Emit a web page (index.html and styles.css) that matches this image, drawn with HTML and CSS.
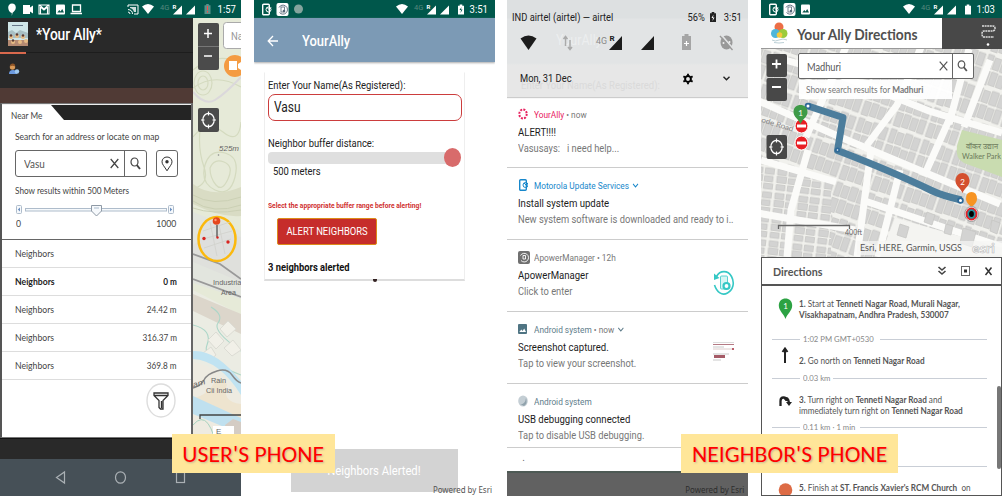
FILE: index.html
```html
<!DOCTYPE html>
<html lang="en">
<head>
<meta charset="utf-8">
<title>Your Ally</title>
<link rel="stylesheet" href="styles.css">
</head>
<body>
<svg class="defs" width="0" height="0">
  <defs>
    <g id="wifi"><path d="M0 2.6Q6 -2.6 12 2.6L6 10z"/></g>
    <g id="signal"><path d="M9 0V9H0z"/></g>
    <g id="battery"><path d="M1.7 0h2.6v1.2H6V10H0V1.2h1.700z"/></g>
    <g id="phone"><rect x=".7" y=".7" width="6.600" height="10.600" rx="1" fill="none" stroke="currentColor" stroke-width="1.400"/><circle cx="6.500" cy="6" r="2.500" fill="none" stroke="currentColor"/><path d="M5 4l2 2 2-2" fill="none" stroke="currentColor"/></g>
    <g id="sync"><rect width="12" height="13" rx="2"/><path d="M2.500 4.500A4.500 4.500 0 1 1 3 9.500" fill="none" stroke="#567" stroke-width=".9"/><rect x="4.500" y="4" width="3.500" height="5" fill="none" stroke="#567" stroke-width=".8"/><circle cx="7.500" cy="8" r="1.300" fill="#567"/></g>
    <g id="image"><rect width="9" height="10" rx="1"/><path d="M1.300 8l2-2.600 1.300 1.500 1.600-2.400L8 8z" fill="#0b594e"/></g>
    <pattern id="houses" width="34" height="34" patternUnits="userSpaceOnUse" patternTransform="rotate(19)">
      <path d="M1 1h6v14H1zM8.500 2.500h6.500v12H8.500zM16.500 1h7v14h-7zM25 2h7v13h-7zM1 17.500h7v14H1zM9.500 17h6.500v13.500H9.500zM17.500 18h6.500v12.500h-6.500zM25.500 17h6.500v14h-6.500z" fill="#d3d3d2" stroke="#c4c4c2" stroke-width=".7"/>
    </pattern>
    <pattern id="houses2" width="24" height="24" patternUnits="userSpaceOnUse" patternTransform="rotate(7)">
      <path d="M1 1h9v5.500H1zM12.500 1h9v6h-9zM1 8h9.500v6.500H1zM12.500 9h8.500v5.500h-8.500zM1 16.500h9V22H1zM12.500 16.500h9V22h-9z" fill="#d3d3d2" stroke="#c4c4c2" stroke-width=".7"/>
    </pattern>
  </defs>
</svg>

<main class="board">
  <section class="phone finder">
    <div class="status">
      <svg width="215" height="18" viewBox="0 0 215 18" fill="#fff">
        <path d="M12 3.500c2.300 0 3.800 1.600 3.800 4 0 2.700-1.700 3.700-3.200 5.200L11.800 16v-3C9.500 12.600 8.200 10 8.200 7.600 8.200 5.200 9.700 3.500 12 3.500z"/>
        <path d="M23 5h7v2.500l3-2v8l-3-2V14h-7z"/>
        <path d="M39 5h10v9H39zM40.500 14V7l3.500 3 3.500-3v7M39.500 5l4.500 4 4.500-4" fill="none" stroke="#fff" stroke-width="1.100"/>
        <use href="#image" x="56" y="4.500"/>
        <path d="M72.500 5h8v6.500h-8zM70.500 13.500h11.500" fill="none" stroke="#fff" stroke-width="1.300"/>
        <path d="M128 7V5h10v9h-4M128 9.500q4.500.5 4.500 4.500M128 12q2 .2 2 2" fill="none" stroke="#fff"/><path d="M130 7h6v5h-2q-1-3.500-4-4z" opacity=".8"/>
        <use href="#wifi" x="142" y="4"/>
        <text class="net" x="160" y="9.500">4G</text><text class="roam" x="172.500" y="9">R</text>
        <use href="#signal" x="173" y="5.500"/><use href="#signal" x="186" y="5.500"/>
        <use href="#battery" x="204.500" y="4" opacity=".35"/><path d="M207 6h1v4h-1zM207 11h1v1.500h-1z" fill="#f44"/>
      </svg>
      <span class="time">1:57</span>
    </div>
    <div class="finder-body">
      <div class="side">
        <header class="app-head">
          <svg width="20" height="24" viewBox="0 0 20 24"><path fill="#cfe6e8" d="M0 0h20v24H0z"/><path d="M4 3h11v1H4z" fill="#678"/><path d="M0 10l4-2 4 3 4-3 8 3v5H0z" fill="#a9c0c4"/><path d="M0 18h20v6H0z" fill="#b58a72"/><g fill="#e6bb85"><circle cx="3" cy="15" r="2"/><circle cx="9" cy="14" r="2"/><circle cx="15" cy="15" r="2"/><circle cx="5" cy="20" r="2"/><circle cx="12" cy="20" r="2"/><circle cx="18" cy="19" r="2"/></g><g fill="#5b3b33"><circle cx="3" cy="13.500" r="1.200"/><circle cx="9" cy="12.500" r="1.200"/><circle cx="15" cy="13.500" r="1.200"/><circle cx="5" cy="18.500" r="1.200"/></g></svg>
          <h1 class="sq">*Your Ally*</h1>
        </header>
        <div class="tool-row"><i class="active-line"></i>
          <svg width="12" height="13" viewBox="0 0 12 13"><path d="M1 11q0-4 4-4t4 4z" fill="#6d9be0"/><circle cx="4.500" cy="4" r="2.700" fill="#d99a58"/><path d="M1.800 3.500q.5-3 3-3 2.300 0 2.500 3-3-1.500-5.500 0z" fill="#8f5527"/><circle cx="9" cy="8.500" r="2.200" fill="#9fc9ef"/></svg>
        </div>
        <div class="brown"></div>
        <div class="panel">
          <div class="tab"><span class="sq">Near Me</span></div>
          <div class="search-part">
            <p class="sq wide">Search for an address or locate on map</p>
            <div class="search-line">
              <div class="box"><span class="sq">Vasu</span>
                <svg width="9" height="11" viewBox="0 0 9 11"><path d="M.7 1l7.600 9M8.300 1L.7 10" stroke="#444" stroke-width="1.200"/></svg>
                <b class="go"><svg width="11" height="13" viewBox="0 0 11 13"><ellipse cx="4.500" cy="5" rx="3.500" ry="4" fill="none" stroke="#444" stroke-width="1.200"/><path d="M6.800 8l3.200 4" stroke="#444" stroke-width="2"/></svg></b>
              </div>
              <div class="locate"><svg width="12" height="16" viewBox="0 0 12 16"><path d="M6 14.800C3.500 10.500 1 8.500 1 5.800 1 3 3.200 1 6 1s5 2 5 4.800c0 2.700-2.500 4.700-5 9z" fill="none" stroke="#333"/><circle cx="6" cy="5.800" r="1.700" fill="#333"/></svg></div>
            </div>
            <p class="sq range-title">Show results within 500 Meters</p>
            <svg class="range" width="160" height="14" viewBox="0 0 160 14"><g fill="#f6f9fc" stroke="#aebccb"><rect x="1.500" y="2.500" width="5" height="8" rx="1"/><rect x="153.500" y="2.500" width="5" height="8" rx="1"/><rect x="10.500" y="5.500" width="141" height="2.500"/><path d="M76.500 2.500h10V8l-5 5-5-5z" stroke="#8f9aa6"/></g><path d="M5 4.500v4L2.800 6.500zM155 4.500v4l2.200-2z" fill="#6c8fc0"/><path d="M79 5h5" stroke="#abc"/></svg>
            <div class="ends"><span class="sq">0</span><span class="sq rt">1000</span></div>
          </div>
          <ul class="rows">
            <li><span class="sq wider">Neighbors</span></li>
            <li class="strong"><span class="sq wider">Neighbors</span><span class="sq rt">0 m</span></li>
            <li><span class="sq wider">Neighbors</span><span class="sq rt">24.42 m</span></li>
            <li><span class="sq wider">Neighbors</span><span class="sq rt">316.37 m</span></li>
            <li><span class="sq wider">Neighbors</span><span class="sq rt">369.8 m</span></li>
          </ul>
          <div class="filter"><svg width="30" height="35" viewBox="0 0 30 35"><ellipse cx="15" cy="17.500" rx="14" ry="16.500" fill="#fff" stroke="#ddd" stroke-width="1.400"/><path d="M8 10h14v2.500l-5 5V26h-2.500L13 24.500v-7l-5-5zM8.500 12.500h13M15.500 18v7" fill="none" stroke="#333" stroke-width="1.300"/></svg></div>
        </div>
        <div class="foot"></div>
      </div>
      <svg class="terrain" width="48" height="441" viewBox="193 18 48 441">
        <path fill="#e6ead8" d="M193 18h48v441h-48z"/>
        <g fill="none" stroke="#d4dabf" stroke-width="1.200"><path d="M193 70q20-18 48-8M193 88q22-16 48-1M193 137q14-18 30-5t18-10M205 165q5-16 20-12t10 24-20 13-10-25zM210 168q4-10 14-6t4 17-12 6-6-17zM200 130q-2 20 4 37t-11 22"/><ellipse cx="203" cy="83" rx="9" ry="12"/><ellipse cx="203" cy="83" rx="5" ry="7"/></g>
        <path d="M193 184q20 15 48 3v29q-20 2-48-12z" fill="#d9dcc4"/><path d="M193 195q20 12 48 2M193 201q20 14 48 4M193 208q20 7 48 2" stroke="#cbd0b4" fill="none"/>
        <path d="M193 92q12 14 22 8t26-23" fill="none" stroke="#dbd8db" stroke-width="2"/>
        <path d="M193 212l48 19v68l-48-16z" fill="#e2e5de"/>
        <path d="M193 245q20-15 48-8v45l-48-20z" fill="#dfe0dc"/>
        <path d="M193 290l48 25v144h-48z" fill="#ebece3"/><path d="M193 294l48 20v20l-48-23z" fill="#dcd6cb"/>
        <path d="M193 254l27 10 21 15M193 279l48 18" fill="none" stroke="#999" stroke-width="1.800"/>
        <path d="M193 325q20 5 14 20t34 30M211 307q13 8 7 16t23 28" fill="none" stroke="#acd6c8" stroke-width="1.100"/>
        <g fill="#f1f0e8" stroke="#dcdcd4"><path d="M208 340l8-8 8 9-8 8zM220 329l8-8 8 8-9 8zM224 348l9-8 8 10-9 6zM203 353l8-6 5 8-7 6z"/></g>
        <path d="M193 351q22-2 48 30v14q-22-35-48-36z" fill="#c0e3f2"/><path d="M193 362q25 4 48 34v63h-48z" fill="#eeebe1"/>
        <path d="M193 398q15-2 24-20l10 6q-6 18 14 20v17q-25-6-48-14z" fill="#eee4cf"/>
        <path d="M193 396l48 22v16l-48-20z" fill="#bfe0ef"/><path d="M193 425q17-20 26 34" stroke="#a6d2bf" fill="none"/>
        <path d="M193 388q8-2 11-8t13-9 15 4 9 8" fill="none" stroke="#888" stroke-width="1.500"/>
        <path d="M225 425l8-6 8 3v25l-9 5z" fill="#d4ccc4"/>
        <g class="map-text"><text x="219" y="151" class="it" textLength="20" lengthAdjust="spacingAndGlyphs">525m</text><text x="213" y="285" textLength="30" lengthAdjust="spacingAndGlyphs">Industrial</text><text x="221" y="294.500" textLength="15" lengthAdjust="spacingAndGlyphs">Area</text><text x="211" y="383" textLength="15" lengthAdjust="spacingAndGlyphs">Rain</text><text x="206" y="393" textLength="26" lengthAdjust="spacingAndGlyphs">Cii India</text><text x="193.500" y="388" class="it" textLength="13" lengthAdjust="spacingAndGlyphs" transform="rotate(-18 193 388)">am</text></g>
        <circle cx="218.500" cy="155" r=".8" fill="#888"/>
        <ellipse cx="217" cy="239" rx="18.500" ry="22" fill="#ddd" fill-opacity=".6" stroke="#fbb90e" stroke-width="2.500"/>
        <g stroke="#d0d0cb" stroke-width=".8"><path d="M203 231l27-9M203 239l29-8M204 248l27-9M210 222l7 34M218 220l7 34"/></g>
        <path d="M217 225v12" stroke="#666" stroke-width="1.500"/><circle cx="216.500" cy="221" r="3.800" fill="#e6461d"/><circle cx="215.500" cy="220" r="1.200" fill="#ff9c78"/>
        <g fill="#d8241f"><circle cx="204" cy="238.500" r="1.700"/><circle cx="228" cy="242" r="1.700"/><circle cx="217.500" cy="237.500" r="1.200"/></g>
        <g fill="#4b4b4b"><rect x="198" y="23" width="21" height="47" rx="2"/><rect x="198" y="108" width="21" height="24" rx="2"/></g>
        <path d="M204 33.500h8M208 29v9M204 56h8" stroke="#fff" stroke-width="1.500"/><path d="M198 46.500h21" stroke="#777"/>
        <g fill="none" stroke="#fff" stroke-width="1.200"><ellipse cx="208.500" cy="120" rx="5.700" ry="6.700"/><path d="M208.500 111.500v4M208.500 124.500v4M201 120h3.500M212.500 120h3.500"/></g>
        <rect x="223.500" y="22.500" width="25" height="26" rx="3" fill="#fff" stroke="#aaa"/><text x="231" y="39.500" class="map-hint" textLength="12" lengthAdjust="spacingAndGlyphs">Na</text>
        <circle cx="235" cy="66" r="11" fill="#f49b42"/><path d="M229 61h8v9h-8zM238 64l3-2v8l-3-2z" fill="#fff"/>
        <path d="M193.500 419v-4H241" fill="none" stroke="#444" stroke-width="1.300" transform="translate(6.500 0)"/>
        <path d="M213 426h21v9h-21z" fill="#fff"/><text x="216" y="434" class="map-text">E</text>
      </svg>
    </div>
    <div class="nav"><svg width="241" height="37" viewBox="0 459 241 37" fill="none" stroke="#aab0b4" stroke-width="1.200"><path d="M64.500 472v11l-8-5.500z"/><ellipse cx="120.500" cy="477.500" rx="5" ry="5.700"/><rect x="176.500" y="472.500" width="8" height="10"/></svg></div>
  </section>

  <section class="phone alerting">
    <div class="status">
      <svg width="213" height="18" viewBox="0 0 213 18" fill="#fff" color="#fff">
        <use href="#phone" x="8" y="3.500"/><use href="#sync" x="22.500" y="3"/><circle cx="44.500" cy="9" r="4.500" fill="#84a49d"/>
        <use href="#wifi" x="142" y="4"/><text class="net" x="160" y="9.500">4G</text><text class="roam" x="172.500" y="9">R</text>
        <use href="#signal" x="173" y="5.500"/><use href="#signal" x="186" y="5.500"/><use href="#battery" x="204" y="4.500"/><path d="M207.500 7l-2 3h1.500l-.5 3 2-3.500H207z" fill="#00574b"/>
      </svg>
      <span class="time">3:51</span>
    </div>
    <header class="bar"><svg width="12" height="12" viewBox="0 0 12 12"><path d="M11 6H1.500M6 1L1.200 6 6 11" fill="none" stroke="#fff" stroke-width="1.300"/></svg><h2 class="sq">YourAlly</h2></header>
    <div class="form">
      <label class="sq">Enter Your Name(As Registered):</label>
      <div class="name"><span class="sq">Vasu</span></div>
      <label class="sq dist">Neighbor buffer distance:</label>
      <div class="track"><i class="thumb"></i></div>
      <div class="meters sq">500 meters</div>
      <div class="warn sq">Select the appropriate buffer range before alerting!</div>
      <button class="alert"><span class="sq mid">ALERT NEIGHBORS</span></button>
      <div class="result sq">3 neighbors alerted</div>
      <i class="speck"></i>
    </div>
    <div class="toast"><span class="sq mid">Neighbors Alerted!</span></div>
    <div class="powered sq rt">Powered by Esri</div>
  </section>

  <section class="phone shade">
    <div class="quick">
      <span class="ghost g1 sq">YourAlly</span><span class="ghost g2 sq">Enter Your Name(As Registered):</span>
      <div class="carrier"><span class="sq">IND airtel (airtel) — airtel</span><span class="sq rt pct">56%</span><svg width="6" height="11" viewBox="0 0 6 11" fill="#222"><use href="#battery"/><path d="M3.500 2.500l-2 3.500H3L2.500 9l2-3.500H3z" fill="#fff"/></svg><span class="sq rt clock">3:51</span></div>
      <svg class="toggles" width="241" height="34" viewBox="507 26 241 34" fill="#1c1c1c">
        <path d="M520.500 38.500q8-6 16 0L528.500 50z"/><g stroke="#aaa" stroke-width="1.500" fill="none"><path d="M565.500 46V37M563.500 39l2-2.500 2 2.500M570 40v9M568 47l2 2.500 2-2.500"/></g>
        <text x="596" y="43.500" fill="#888" class="bignet" textLength="11" lengthAdjust="spacingAndGlyphs">4G</text><text x="609.500" y="41" class="bigr">R</text><path d="M622 36v14h-13zM654 36v14h-13z"/>
        <path d="M684.500 34h4v2h2.500v14h-9V36h2.500z" fill="#a5a5a5"/><path d="M684 43.500h5M686.500 41v5" stroke="#fff" stroke-width="1.200"/>
        <ellipse cx="726.500" cy="42.500" rx="6" ry="7" fill="#999"/><path d="M720.500 34l13 15" stroke="#e2e4e5" stroke-width="1.700"/><path d="M720 36l12.500 14" stroke="#999" stroke-width="1.300"/><circle cx="723.500" cy="43" r="1" fill="#eee"/><circle cx="729.500" cy="42" r="1" fill="#eee"/>
      </svg>
      <div class="date"><span class="sq">Mon, 31 Dec</span>
        <svg width="10" height="12" viewBox="-5.500 -6 11 12"><circle r="3.200" fill="none" stroke="#000" stroke-width="2.200"/><path d="M-1 -5.800h2v2h-2zM-1 3.800h2v2h-2z"/><path d="M-1 -5.800h2v2h-2zM-1 3.800h2v2h-2z" transform="rotate(60)"/><path d="M-1 -5.800h2v2h-2zM-1 3.800h2v2h-2z" transform="rotate(120)"/></svg>
        <svg width="7" height="5" viewBox="0 0 7 5"><path d="M.5.800l3 3 3-3" fill="none" stroke="#222" stroke-width="1.400"/></svg></div>
    </div>
    <article class="note pink"><div class="from"><svg width="10" height="12" viewBox="0 0 10 12"><ellipse cx="5" cy="6" rx="3.700" ry="4.500" fill="none" stroke="#e8215f" stroke-width="2" stroke-dasharray="2 1.200"/></svg><span class="sq"><b>YourAlly</b> • now</span></div><h3 class="sq">ALERT!!!!</h3><p class="sq">Vasusays: &nbsp; i need help...</p></article>
    <article class="note blue"><div class="from"><svg width="10" height="12" viewBox="0 0 10 12" color="#1787cb"><use href="#phone" x="1"/></svg><span class="sq"><b>Motorola Update Services</b> <svg width="7" height="5" viewBox="0 0 7 5"><path d="M.5.800l3 3 3-3" fill="none" stroke="#1787cb" stroke-width="1.200"/></svg></span></div><h3 class="sq">Install system update</h3><p class="sq">New system software is downloaded and ready to i..</p></article>
    <article class="note"><div class="from"><svg width="12" height="13" viewBox="0 0 12 13" fill="#707070"><rect width="12" height="13" rx="2"/><g fill="none" stroke="#fff" stroke-width=".9"><path d="M2.500 4.500A4.300 4.300 0 1 1 3 9.500M5 4.500h2.500v3.500H5z"/></g></svg><span class="sq">ApowerManager • 12h</span></div><h3 class="sq">ApowerManager</h3><p class="sq">Click to enter</p>
      <svg class="thumbnail" width="22" height="26" viewBox="0 0 22 26"><g fill="none" stroke="#35c8c5" stroke-width="1.600"><path d="M3.500 6.500C7 0 15 0 18.500 6.500S20 20 14.500 23 4 22.500 1.500 15"/><rect x="7.500" y="6" width="7" height="13" rx="1" fill="#d7f6f4" stroke-width=".8"/><circle cx="13.500" cy="16" r="3" fill="#fff" stroke-width="2.200"/></g><path d="M1 3.500v6.500l5.500-2z" fill="#35c8c5"/></svg></article>
    <article class="note slate"><div class="from"><svg width="9" height="10" viewBox="0 0 9 10" fill="#4f7483"><rect width="9" height="10" rx="1"/><path d="M1.300 8l2-2.600 1.300 1.500 1.600-2.400L8 8z" fill="#fff"/></svg><span class="sq"><b>Android system</b> • now <svg width="7" height="5" viewBox="0 0 7 5"><path d="M.5.800l3 3 3-3" fill="none" stroke="#607d8b" stroke-width="1.200"/></svg></span></div><h3 class="sq">Screenshot captured.</h3><p class="sq">Tap to view your screenshot.</p>
      <svg class="thumbnail" width="22" height="20" viewBox="0 0 22 20"><path d="M0 .5h21" stroke="#ddd"/><path d="M0 2.500h21" stroke="#b57a84"/><path d="M0 5h11M0 12h16M0 18h8" stroke="#bbb" stroke-width=".8"/><path d="M0 7h21" stroke="#dcc"/><circle cx="20" cy="7" r="1" fill="#a34"/><rect x="1" y="13" width="11" height="3" fill="#a55b67"/></svg></article>
    <article class="note slate last"><div class="from"><svg width="10" height="12" viewBox="0 0 10 12"><ellipse cx="5" cy="6" rx="4.800" ry="5.500" fill="#c4ced4"/><path d="M2 9q5 1 6-6 2 5-2 8z" fill="#90a2ac"/></svg><span class="sq"><b>Android system</b></span></div><h3 class="sq">USB debugging connected</h3><p class="sq">Tap to disable USB debugging.</p></article>
    <div class="more">.</div>
    <div class="under"><span class="sq rt">Powered by Esri</span></div>
  </section>

  <section class="phone directions">
    <div class="status">
      <svg width="213" height="18" viewBox="0 0 213 18" fill="#fff" color="#fff">
        <use href="#phone" x="8" y="3.500"/><use href="#sync" x="22.500" y="3"/><use href="#image" x="40" y="4.500"/>
        <use href="#wifi" x="142" y="4"/><text class="net" x="160" y="9.500">4G</text><text class="roam" x="172.500" y="9">R</text>
        <use href="#signal" x="173" y="5.500"/><use href="#signal" x="186" y="5.500"/><use href="#battery" x="204" y="4.500"/>
      </svg>
      <span class="time">1:03</span>
    </div>
    <header class="dir-head">
      <svg width="17" height="22" viewBox="0 0 17 22"><circle cx="8" cy="5" r="4.500" fill="#ec6e46"/><circle cx="4.500" cy="11.500" r="4.500" fill="#4fb6d9"/><circle cx="12" cy="11.500" r="4.500" fill="#9bcb3c"/><circle cx="8.500" cy="13" r="2.800" fill="#f6c83d"/><path d="M1 18q3 2 7 0t8 0M3 20.500q5 1 10 0" stroke="#bcd0d6" fill="none"/></svg>
      <h2 class="sq">Your Ally Directions</h2>
      <div class="route-tab"><svg width="16" height="24" viewBox="0 0 16 24"><path d="M2 3h11q2 0 2 2.200T13 8H4Q2 8 2 11t2 3h10" fill="none" stroke="#ddd" stroke-width="1.500" stroke-dasharray="2 .6"/><circle cx="8" cy="21.500" r="1.300" fill="#fff"/></svg></div>
    </header>
    <div class="street">
      <svg width="241" height="208" viewBox="761 49 241 208">
        <path fill="#f1f1ed" d="M761 49h241v208H761z"/><path fill="url(#houses)" d="M761 49h241v208H761z"/>
        <path fill="#f1f1ed" d="M761 162l70 20v75h-70z"/><path fill="url(#houses2)" d="M761 162l70 20v75h-70z"/>
        <g fill="none" stroke="#fbfbf9" stroke-width="7"><path d="M745 95l95 42 160 67M761 160l75 22M785 60l54 15 90 36 73 22M808 150l-17 60-4 47M871 150l-14 107M846 47l-40 90M922 45l-25 60-30 40M949 120l-24 54M969 49l-20 75M900 170l-22 87M740 210l115 20M862 200l140 47M990 60l-26 67"/></g>
        <path d="M895 218l107 30v9H880z" fill="#f4f4f1"/>
        <g fill="#d3d3d2" stroke="#c4c4c2" stroke-width=".7"><path d="M927 212l8 3-3 10-8-3zM946 224l7 2-2 9-7-2zM963 228l13 4-4 15-12-4zM992 220l8 3-3 11-7-3zM900 224l9 3-3 11-9-3z"/></g>
        <path d="M962 130l40 10v37l-38-14q-9-4-7-17z" fill="#c9dcb0"/>
        <g class="street-text"><text x="966" y="149" textLength="32" lengthAdjust="spacingAndGlyphs" class="green">वॉकर उद्यान</text><text x="962" y="158.500" class="green" textLength="39" lengthAdjust="spacingAndGlyphs">Walker Park</text><text x="761" y="122" transform="rotate(17 761 122)" textLength="33" lengthAdjust="spacingAndGlyphs">ode Road</text></g>
        <path d="M808 106l35 11.500-5.500 33q55 21 94 40 10 5 30 9.500" fill="none" stroke="#4c7d9c" stroke-width="7" stroke-linejoin="round"/>
        <g fill="#fff" stroke="#2f6a99" stroke-width="1.800"><circle cx="808" cy="106" r="2.400"/><circle cx="837.500" cy="150" r="1.700"/><circle cx="960.500" cy="200.500" r="2.400"/></g>
        <g fill="#e91e24" stroke="#fff"><ellipse cx="801.500" cy="126" rx="6.500" ry="7"/><ellipse cx="801.500" cy="143" rx="6.500" ry="7"/></g><path d="M797 126h9M797 143h9" stroke="#fff" stroke-width="3"/>
        <path d="M800.500 124c-2-5-7-7-7-12 0-4.500 3.200-7 7-7s7 2.500 7 7c0 5-5 7-7 12z" fill="#3f9b48"/><text class="pin" x="800.500" y="116">1</text>
        <path d="M962.500 193c-2-5-7-7-7-12 0-5 3.200-8 7-8s7 3 7 8c0 5-5 7-7 12z" fill="#d4502f"/><text class="pin" x="962.500" y="184.500">2</text>
        <path d="M966 199q0-7 5.500-7t5.500 7q0 4-5.500 8-5.500-4-5.500-8z" fill="#f79423"/>
        <ellipse cx="971.500" cy="214" rx="6.800" ry="7.500" fill="#fff" stroke="#999"/><ellipse cx="971.500" cy="214" rx="5" ry="5.700" fill="#26909d" stroke="#e52027" stroke-width="1.800"/><ellipse cx="971.500" cy="214" rx="2.400" ry="3"/>
        <path d="M778.500 229v-3.500h71V229" fill="none" stroke="#666" stroke-width="1.300"/><text x="845" y="235" class="scale" textLength="17" lengthAdjust="spacingAndGlyphs">400ft</text>
        <path d="M857 241h145v14H857z" fill="#f7f7f5" opacity=".7"/><text x="860" y="251" class="credit" textLength="102" lengthAdjust="spacingAndGlyphs">Esri, HERE, Garmin, USGS</text><text x="972" y="252.500" class="esri" textLength="23" lengthAdjust="spacingAndGlyphs">esri</text>
        <g fill="#484848"><rect x="766.500" y="54" width="20.500" height="23" rx="2"/><rect x="766.500" y="78" width="20.500" height="23" rx="2"/><rect x="766.500" y="135" width="20.500" height="24" rx="2"/></g>
        <path d="M772 64h9M776.500 59.500v9M772 87h9" stroke="#fff" stroke-width="1.800"/><g fill="none" stroke="#fff" stroke-width="1.200"><ellipse cx="776.500" cy="147" rx="5.700" ry="6.700"/><path d="M776.500 138.500v4M776.500 151.500v4M769 147h3.500M780.500 147h3.500"/></g>
      </svg>
      <div class="find"><span class="sq">Madhuri</span><svg width="9" height="10" viewBox="0 0 9 10"><path d="M.7.700l7.600 8.600M8.300.700L.7 9.300" stroke="#555" stroke-width="1.200"/></svg><b><svg width="11" height="12" viewBox="0 0 11 12"><ellipse cx="4.500" cy="4.500" rx="3.300" ry="3.700" fill="none" stroke="#555" stroke-width="1.200"/><path d="M6.800 7.300l3 3.700" stroke="#555" stroke-width="1.800"/></svg></b></div>
      <div class="hint"><span class="sq wider">Show search results for <b>Madhuri</b></span></div>
    </div>
    <div class="sheet">
      <div class="sheet-head"><span class="sq wider">Directions</span><svg width="57" height="12" viewBox="0 0 57 12"><path d="M1.500 2l3.500 3 3.500-3M1.500 6l3.500 3 3.500-3" fill="none" stroke="#444" stroke-width="1.600"/><rect x="24.500" y="1.500" width="8" height="9" fill="none" stroke="#666"/><rect x="27" y="4.500" width="3" height="3" fill="#333"/><path d="M48.500 2.500l6 7.500M54.500 2.500l-6 7.500" stroke="#333" stroke-width="1.500"/></svg></div>
      <div class="steps">
        <i class="scroll"></i>
        <div class="step first"><svg width="15" height="22" viewBox="0 0 15 22"><path d="M7.500 21C6 16 .800 13 .800 7.500.800 3 4 .500 7.500.500S14.200 3 14.200 7.500C14.200 13 9 16 7.500 21z" fill="#2ca243"/><text class="pin" x="7.500" y="10.500">1</text></svg><p class="sq"><b>1.</b> Start at <b>Tenneti Nagar Road, Murali Nagar,<br>Visakhapatnam, Andhra Pradesh, 530007</b></p></div>
        <div class="rule"><span class="sq">1:02 PM GMT+0530</span></div>
        <div class="step second"><svg width="15" height="17" viewBox="0 0 15 17"><path d="M7 16V3M4.500 5L7 1.500 9.500 5" fill="none" stroke="#222" stroke-width="2"/></svg><p class="sq"><b>2.</b> Go north on <b>Tenneti Nagar Road</b></p></div>
        <div class="rule"><span class="sq">0.03 km</span></div>
        <div class="step third"><svg width="15" height="14" viewBox="0 0 15 14"><path d="M2.500 11V6Q2.500 2.500 5.500 2.500T8.500 6M6 4q4-3 5 4" fill="none" stroke="#222" stroke-width="2.300"/><path d="M8 7h6l-3 4z" fill="#222"/></svg><p class="sq"><b>3.</b> Turn right on <b>Tenneti Nagar Road</b> and<br>immediately turn right on <b>Tenneti Nagar Road</b></p></div>
        <div class="rule"><span class="sq">0.11 km · 1 min</span></div>
        <div class="step fourth"></div>
        <div class="rule plain"></div>
        <div class="step fifth"><svg width="15" height="15" viewBox="0 0 15 15"><circle cx="7.500" cy="8" r="6.800" fill="#dd6b45"/></svg><p class="sq"><b>5.</b> Finish at <b>ST. Francis Xavier's RCM Church</b> &nbsp;on</p></div>
      </div>
    </div>
  </section>
</main>
<div class="caption user"><span>USER'S PHONE</span></div>
<div class="caption neighbor"><span>NEIGHBOR'S PHONE</span></div>
</body>
</html>
```
FILE: styles.css
```css
* { box-sizing: border-box; margin: 0; padding: 0; }
body { width: 1002px; height: 497px; background: #fff; overflow: hidden; position: relative; font-family: Roboto, sans-serif; color: #222; }
svg { display: block; flex: none; }
.defs { position: absolute; }
ul { list-style: none; }
.board { display: grid; grid-template-columns: 241px 241px 241px 241px; column-gap: 12.670px; height: 496px; }
.phone { height: 496px; overflow: hidden; position: relative; }

/* Narrow type, squeezed to the handset's aspect */
.sq { display: inline-block; white-space: nowrap; transform: scaleX(.864); transform-origin: left center; }
.sq.wide { transform: scaleX(.895); }
.sq.wider { transform: scaleX(.91); }
.sq.rt { transform-origin: right center; }
.sq.mid { transform-origin: center; }

.status { height: 18px; background: #00574b; display: flex; align-items: center; }
.time { color: #fff; font-size: 11px; line-height: 18px; padding-top: 1px; transform: scaleX(.864); transform-origin: left; white-space: nowrap; padding-left: 3px; }
.net { font-size: 7.500px; fill: #56877e; }
.roam { font-size: 6px; font-weight: 700; }

/* Nearby finder */
.finder-body { display: flex; height: 441px; }
.side { width: 193px; display: flex; flex-direction: column; background: #292929; }
.app-head { height: 35px; display: flex; align-items: center; padding: 0 0 2px 8px; gap: 8px; border-bottom: 1px solid #1d1d1d; }
.app-head h1 { font-size: 16px; font-weight: 500; color: #fff; letter-spacing: -.15px; }
.tool-row { height: 35px; padding: 10px 0 0 8px; }
.active-line { display: block; width: 26px; height: 2px; background: #d9694d; margin: -11px 0 9px -8px; }
.brown { height: 15px; background: #503a35; }
.panel { height: 335px; background: #fff; border: 1px solid #777; border-left: 2px solid #555; border-right: 2px solid #666; font-family: Lato, sans-serif; color: #444; }
.tab { height: 16px; border-top: 1px solid #eee; background: #242424; position: relative; z-index: 0; padding-left: 9px; }
.tab span { font-size: 9.500px; line-height: 17px; position: relative; bottom: 2px; }
.tab::before { content: ""; position: absolute; inset: 0 auto 0 0; width: 62px; background: #fff; clip-path: polygon(0 0, 49px 0, 100% 100%, 0 100%); z-index: -1; }
.search-part { height: 120px; border-bottom: 1px solid #666; padding: 10px 0 0 13px; font-size: 9.500px; }
.search-part p { display: block; line-height: 14px; height: 14px; }
.search-line { display: flex; gap: 9px; padding-top: 6px; }
.box, .locate { height: 27px; border: 1px solid #666; border-radius: 3px; display: flex; align-items: center; }
.box { width: 132px; padding-left: 8px; font-size: 11.500px; justify-content: space-between; color: #555; }
.box > svg { margin-left: 56px; }
.go { height: 25px; width: 22px; border-left: 1px solid #666; display: flex; align-items: center; justify-content: center; }
.locate { width: 22px; justify-content: center; }
.range-title { margin-top: 7px; }
.range { margin-top: 5px; }
.ends { width: 162px; display: flex; justify-content: space-between; line-height: 13px; padding: 0 1px 0 1px; font-size: 10px; }
.rows li { height: 28px; border-bottom: 1px solid #ddd; display: flex; justify-content: space-between; line-height: 27px; padding: 0 14px 0 13px; font-size: 9.500px; }
.rows .strong { font-weight: 700; color: #222; }
.filter { padding: 3px 0 0 144px; }
.foot { flex: 1; border-top: 1px solid #111; }
.map-text { font: 8px "Liberation Sans", sans-serif; fill: #666; }
.it { font-style: italic; }
.map-hint { font-size: 11px; fill: #999; }
.nav { height: 37px; background: #465057; }

/* Alert form */
.alerting { background: #fff; }
.bar { height: 44px; background: #7c9ab5; box-shadow: 0 1px 2px #aaa; display: flex; align-items: center; gap: 23px; padding: 2px 0 0 13px; }
.bar h2 { color: #fff; font-size: 15px; font-weight: 500; }
.form { margin: 10px 0 0 10px; width: 201px; height: 209px; border: 1px solid #eee; border-top-color: #fff; border-bottom: 2px solid #ddd; padding: 5px 3px 0; position: relative; font-size: 10.900px; display: flex; flex-direction: column; align-items: flex-start; }
.form label { line-height: 15px; }
.name { width: 194px; height: 27px; margin-top: 1px; border: 1.500px solid #cc3d3d; border-radius: 7px; padding-left: 5px; font-size: 13.800px; line-height: 24px; }
.dist { margin-top: 15px; }
.track { width: 192px; height: 12px; border-radius: 4px; background: #dfdfdf; margin-top: 1px; position: relative; }
.thumb { position: absolute; right: -1px; top: -4px; width: 17px; height: 19px; border-radius: 50%; background: #d86b6b; }
.meters { line-height: 15px; margin: 0 0 0 5px; }
.warn { color: #d0302f; font-weight: 700; font-size: 7.750px; line-height: 12px; margin-top: 21px; }
.alert { width: 100px; height: 27px; margin: 6px 0 0 9px; background: #c62d2b; border: 1px solid #dc8a1a; border-radius: 2px; color: #fff; font: 10.900px Roboto, sans-serif; display: flex; justify-content: center; align-items: center; }
.result { font-size: 10.800px; font-weight: 700; color: #111; line-height: 15px; margin-top: 15px; }
.speck { position: absolute; left: 108px; bottom: -3px; width: 4px; height: 3px; background: #322; border-radius: 0 0 3px 3px; }
.toast { width: 167px; height: 43px; margin: 168px 0 0 37px; background: #d3d3d3; color: #fff; font-size: 13px; display: flex; justify-content: center; align-items: center; }
.powered { display: block; text-align: right; margin: -8px 3px 0 0; font: 9.200px/12px "Noto Sans", sans-serif; color: #555; position: relative; }

/* Notification shade */
.shade { background: #fff; }
.quick { height: 97px; position: relative; background: linear-gradient(#dde0e1 0 18px, #e2e4e5 19px 63px, #e7e7e7 65px); box-shadow: 0 1px 1px #ccc; margin-bottom: 2px; }
.ghost { position: absolute; }
.g1 { left: 49px; top: 32px; font-size: 14.500px; color: #eceeef; }
.g2 { left: 14px; top: 79px; font-size: 11px; color: #dadada; }
.carrier { height: 26px; display: flex; align-items: center; padding: 9px 6px 0 5px; font-size: 10.800px; position: relative; }
.pct { margin-left: auto; padding-right: 6px; }
.clock { padding-left: 5px; }
.toggles { position: relative; }
.bignet { font-size: 9.500px; }
.bigr { font-size: 8px; font-weight: 700; }
.date { height: 37px; display: flex; align-items: center; padding: 0 18px 0 13px; font-size: 10.800px; position: relative; }
.date svg:nth-of-type(1) { margin: 0 30px 0 auto; }
.note { height: 72px; border-bottom: 1px solid #ccc; padding: 9px 10px 0 11px; position: relative; }
.note .from { height: 16px; display: flex; align-items: center; font-size: 9.600px; color: #777; }
.from > span { margin-left: auto; width: calc(100% - 16px); }
.from span svg { display: inline-block; vertical-align: 1px; margin-left: 2px; }
.from b { font-weight: 400; }
.note h3 { display: block; font-size: 11.100px; font-weight: 400; line-height: 16px; margin-top: 3px; color: #1c1c1c; }
.note p { display: block; font-size: 10.800px; line-height: 15px; color: #777; }
.pink b { color: #e8215f; }
.blue b { color: #1787cb; }
.slate b { color: #607d8b; }
.thumbnail { position: absolute; right: 13px; top: 30px; }
.last { height: 64px; }
.more { height: 23px; padding: 0 15px; font: 10px/19px Roboto, sans-serif; color: #666; }
.pink { height: 69px; padding-top: 7px; }
.under { height: 30px; background: #616161; border-top: 2px solid #4e5a55; font: 9.200px/12px "Noto Sans", sans-serif; color: #2e2e2e; text-align: right; padding: 11px 4px 0; }

/* Directions */
.directions { font-family: Lato, sans-serif; }
.directions .time { font-family: Roboto, sans-serif; }
.directions .net, .directions .roam { font-family: Roboto, sans-serif; }
.dir-head { height: 31px; display: flex; align-items: center; padding-left: 10px; gap: 9px; border-bottom: 1px solid #999; }
.dir-head h2 { font-size: 15.900px; font-weight: 700; color: #505050; width: 100px; }
.route-tab { margin-left: auto; width: 60px; height: 31px; background: #484848; padding: 5px 0 0 38px; }
.street { height: 208px; position: relative; }
.street-text { font-size: 7.500px; fill: #888; }
.green { fill: #6b7a5b; }
.pin { font: 8px Lato, sans-serif; fill: #fff; text-anchor: middle; }
.scale { font-size: 8px; fill: #666; }
.credit { font-size: 9.500px; fill: #555; }
.esri { font-size: 13px; font-weight: 700; fill: #fff; stroke: #bbb; stroke-width: .6; }
.find { position: absolute; left: 37px; top: 4px; width: 176px; height: 26px; background: #fff; border: 1px solid #666; border-radius: 2px; display: flex; align-items: center; padding-left: 8px; font-size: 10.700px; color: #555; }
.find > svg { margin-left: auto; margin-right: 4px; }
.find b { width: 21px; height: 24px; border-left: 1px solid #666; display: flex; align-items: center; justify-content: center; }
.hint { position: absolute; left: 38px; top: 31px; width: 153px; height: 19px; background: #fffffff0; padding-left: 7px; font-size: 9.100px; line-height: 19px; color: #777; }
.sheet { height: 239px; border: 1px solid #555; background: #fff; color: #555; overflow: hidden; }
.sheet-head { height: 28px; border-bottom: 2px solid #555; display: flex; align-items: center; justify-content: space-between; padding: 0 7px 0 11px; font-size: 11.800px; font-weight: 700; }
.steps { padding: 0 14px 0 10px; position: relative; font-size: 8.900px; line-height: 11px; }
.steps .sq { transform: scaleX(.92); }
.scroll { position: absolute; right: 0; top: 100px; width: 4px; height: 83px; border-radius: 2px; background: #777; }
.step { display: flex; gap: 6px; padding-left: 6px; }
.first { height: 48px; padding-top: 12px; }
.second { height: 29px; padding-top: 3px; align-items: flex-start; }
.second p { padding-top: 8px; }
.third { height: 39px; padding-top: 11px; }
.third > svg { margin-top: 1px; }
.fourth { height: 29px; }
.fifth { padding-top: 11px; }
.step p { height: 22px; }
.rule { height: 10px; display: flex; align-items: center; line-height: 10px; color: #888; font-size: 8.400px; }
.rule::before { content: ""; width: 28px; height: 1px; background: #c9ced6; margin-right: 3px; }
.rule::after { content: ""; flex: 1; height: 1px; background: #c9ced6; }
.plain::before { margin: 0; }

/* Captions laid over the screens */
.caption { position: absolute; top: 434px; height: 39px; background: #ffe699; color: #f00; font: 22.500px/42px Carlito, Lato, sans-serif; text-shadow: 1px 1px 2px #8888; display: flex; justify-content: center; white-space: nowrap; }
.caption span { transform: scaleX(1.055); }
.user { left: 172px; width: 163px; }
.neighbor { left: 681px; width: 217px; }
```
